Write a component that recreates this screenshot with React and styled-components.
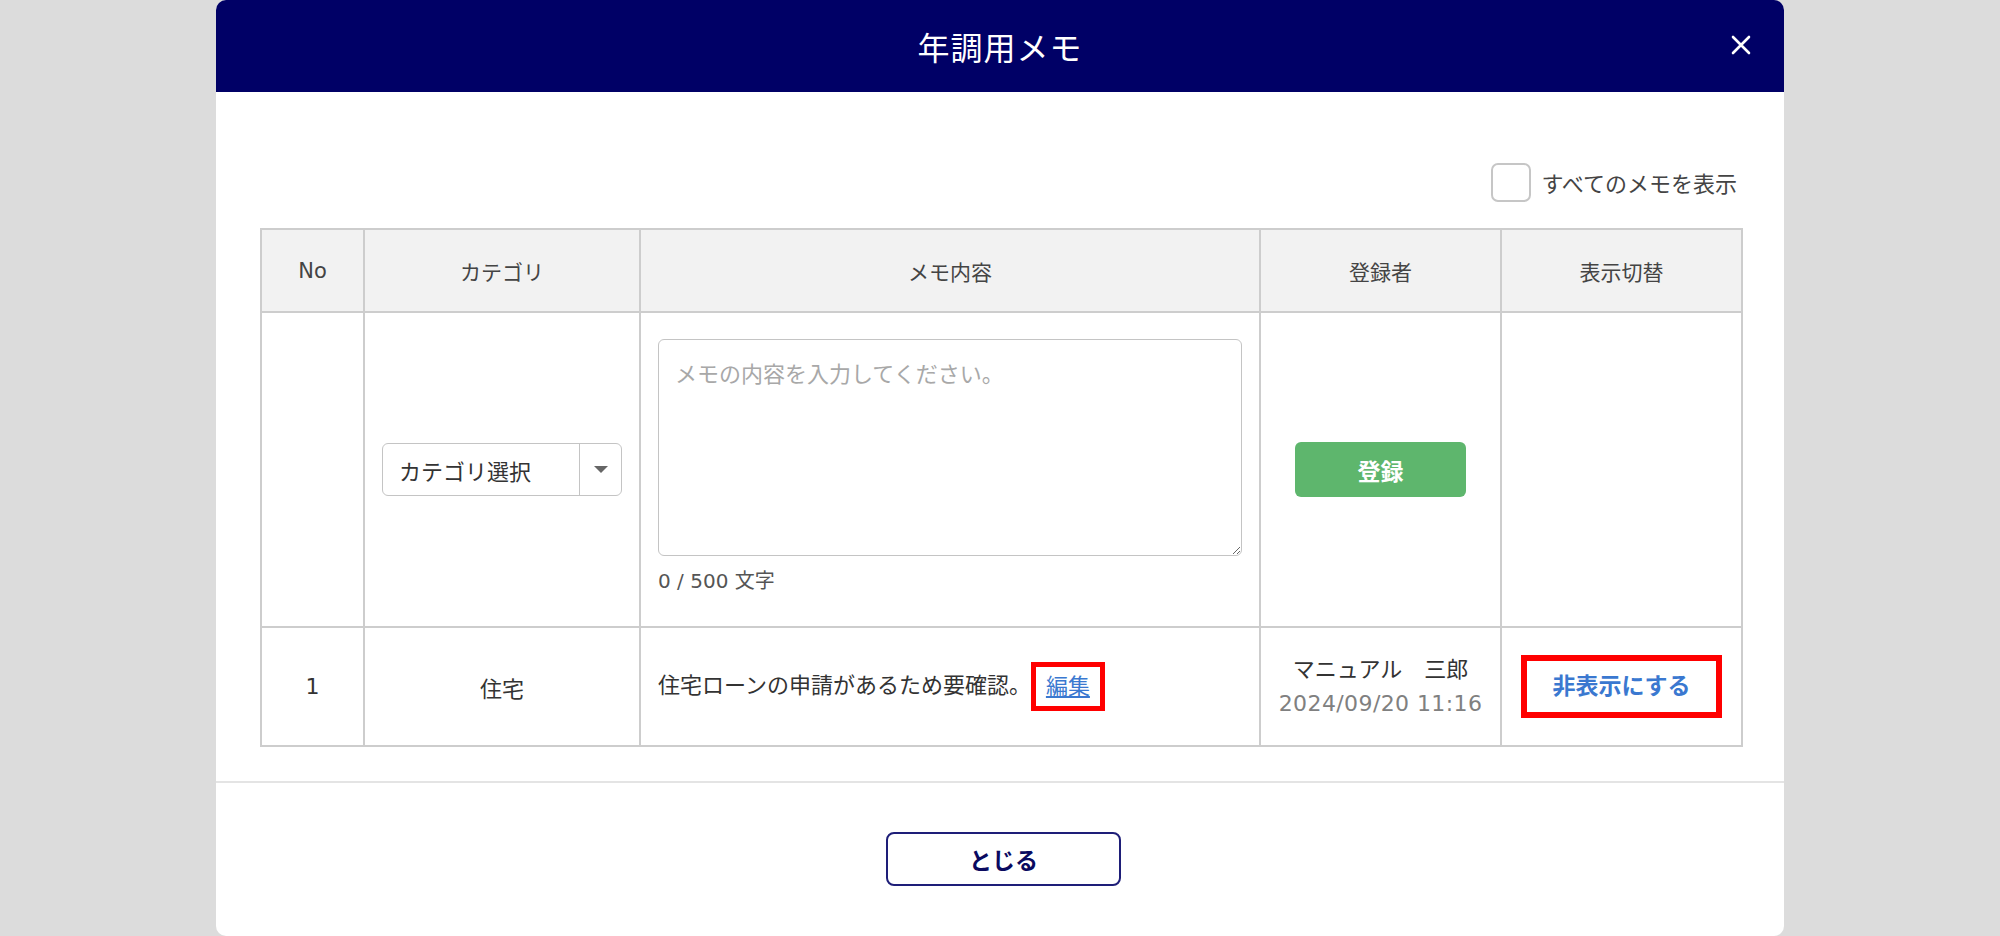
import React from "react";
import styled, { createGlobalStyle } from "styled-components";

// Style is under the component

const memo = {
  no: 1,
  category: "住宅",
  text: "住宅ローンの申請があるため要確認。",
  author: "マニュアル　三郎",
  date: "2024/09/20 11:16",
};

export default function App() {
  return (
    <>
      <GlobalStyle />
      <Modal>
        <Header>
          <Title>年調用メモ</Title>
          <CloseButton aria-label="close">
            <svg width="20" height="20" viewBox="0 0 20 20">
              <path d="M2 2 L18 18 M18 2 L2 18" stroke="#fff" strokeWidth="2.6" strokeLinecap="round" />
            </svg>
          </CloseButton>
        </Header>

        <Body>
          <Toolbar>
            <CheckBox />
            <CheckLabel>すべてのメモを表示</CheckLabel>
          </Toolbar>

          <Table>
            <colgroup>
              <col style={{ width: 103 }} />
              <col style={{ width: 276 }} />
              <col style={{ width: 620 }} />
              <col style={{ width: 241 }} />
              <col style={{ width: 241 }} />
            </colgroup>
            <thead>
              <tr>
                <Th>No</Th>
                <Th>カテゴリ</Th>
                <Th>メモ内容</Th>
                <Th>登録者</Th>
                <Th>表示切替</Th>
              </tr>
            </thead>
            <tbody>
              <tr>
                <Td $h={315} />
                <Td $h={315}>
                  <Select>
                    <SelectLabel>カテゴリ選択</SelectLabel>
                    <SelectArrow>
                      <Caret />
                    </SelectArrow>
                  </Select>
                </Td>
                <Td $h={315} $align="left" $top>
                  <MemoInput placeholder="メモの内容を入力してください。" />
                  <Counter>0 / 500 文字</Counter>
                </Td>
                <Td $h={315}>
                  <SubmitButton>登録</SubmitButton>
                </Td>
                <Td $h={315} />
              </tr>
              <tr>
                <Td $h={119}>{memo.no}</Td>
                <Td $h={119}>{memo.category}</Td>
                <Td $h={119} $align="left">
                  <MemoText>
                    {memo.text}
                    <Mark $pad="0 10px" $line={39} $bw={5}>
                      <EditLink href="#">編集</EditLink>
                    </Mark>
                  </MemoText>
                </Td>
                <Td $h={119}>
                  <Author>{memo.author}</Author>
                  <DateText>{memo.date}</DateText>
                </Td>
                <Td $h={119}>
                  <Mark $pad="0 25px" $line={51} $bw={6}>
                    <HideLink>非表示にする</HideLink>
                  </Mark>
                </Td>
              </tr>
            </tbody>
          </Table>
        </Body>

        <Footer>
          <CloseFooterButton>とじる</CloseFooterButton>
        </Footer>
      </Modal>
    </>
  );
}

// Style

const GlobalStyle = createGlobalStyle`
  html, body {
    margin: 0;
    padding: 0;
    background: #dcdcdc;
  }
  body {
    font-family: "DejaVu Sans", "Noto Sans CJK JP", sans-serif;
    color: #333;
  }
  * { box-sizing: border-box; }
`;

const Modal = styled.div`
  width: 1568px;
  height: 936px;
  margin: 0 auto;
  background: #fff;
  border-radius: 10px;
  overflow: hidden;
  display: flex;
  flex-direction: column;
`;

const Header = styled.header`
  height: 92px;
  flex: none;
  background: #000066;
  display: grid;
  grid-template-columns: 1fr auto 1fr;
  align-items: center;
  padding: 0 33px;
`;

const Title = styled.h1`
  grid-column: 2;
  margin: 0;
  font-family: "Noto Sans CJK JP", sans-serif;
  font-size: 32px;
  font-weight: 400;
  color: #fff;
  letter-spacing: 1px;
`;

const CloseButton = styled.button`
  grid-column: 3;
  justify-self: end;
  width: 20px;
  height: 20px;
  padding: 0;
  border: none;
  background: none;
  display: flex;
  cursor: pointer;
  margin-top: -2px;
`;

const Body = styled.div`
  flex: 1;
  padding: 70px 43px 34px 44px;
`;

const Toolbar = styled.div`
  display: flex;
  justify-content: flex-end;
  align-items: center;
  gap: 10px;
  height: 40px;
  margin-bottom: 26px;
  padding-right: 4px;
`;

const CheckBox = styled.span`
  width: 40px;
  height: 39px;
  border: 2px solid #c6c6c6;
  border-radius: 7px;
  background: #fff;
`;

const CheckLabel = styled.span`
  font-size: 22px;
  color: #444;
`;

const Table = styled.table`
  width: 100%;
  border-collapse: collapse;
  table-layout: fixed;
`;

const Th = styled.th`
  height: 83px;
  background: #f2f2f2;
  border: 2px solid #cdcdcd;
  font-weight: normal;
  font-size: 21px;
  color: #444;
  text-align: center;
`;

const Td = styled.td`
  height: ${p => p.$h}px;
  border: 2px solid #cdcdcd;
  text-align: ${p => p.$align || "center"};
  vertical-align: ${p => (p.$top ? "top" : "middle")};
  padding: ${p => (p.$top ? "26px 17px 0" : p.$align === "left" ? "0 17px" : "0")};
  font-size: 22px;
  color: #333;
`;

const Select = styled.div`
  display: inline-flex;
  width: 240px;
  height: 53px;
  border: 1.5px solid #c4c4c4;
  border-radius: 6px;
  background: #fff;
  text-align: left;
`;

const SelectLabel = styled.span`
  flex: 1;
  display: flex;
  align-items: center;
  padding-left: 16px;
  font-size: 22px;
  color: #333;
  border-right: 1.5px solid #c4c4c4;
`;

const SelectArrow = styled.span`
  width: 41px;
  display: flex;
  align-items: center;
  justify-content: center;
`;

const Caret = styled.span`
  width: 0;
  height: 0;
  border-left: 7px solid transparent;
  border-right: 7px solid transparent;
  border-top: 7px solid #666;
`;

const MemoInput = styled.textarea`
  display: block;
  width: 100%;
  height: 217px;
  border: 1.5px solid #c4c4c4;
  border-radius: 6px;
  padding: 20px 16px;
  font-family: inherit;
  font-size: 22px;
  line-height: 30px;
  color: #333;
  resize: vertical;
  outline: none;

  &::placeholder {
    color: #a8a8a8;
  }
`;

const Counter = styled.div`
  margin-top: 12px;
  font-size: 20px;
  line-height: 26px;
  color: #555;
`;

const SubmitButton = styled.button`
  width: 171px;
  height: 55px;
  border: none;
  border-radius: 6px;
  background: #5eb66d;
  color: #fff;
  font-family: inherit;
  font-size: 23px;
  font-weight: bold;
  cursor: pointer;
`;

const MemoText = styled.span`
  font-size: 22px;
  color: #333;
`;

const Mark = styled.span`
  display: inline-block;
  vertical-align: middle;
  border: ${p => p.$bw}px solid #ff0000;
  padding: ${p => p.$pad};
  line-height: ${p => p.$line}px;
`;

const EditLink = styled.a`
  color: #3a78d0;
  text-decoration: underline;
  font-size: 22px;
`;

const HideLink = styled.span`
  color: #3a78d0;
  font-weight: bold;
  font-size: 23px;
  cursor: pointer;
`;

const Author = styled.div`
  font-size: 22px;
  line-height: 34px;
  color: #333;
`;

const DateText = styled.div`
  font-size: 22px;
  letter-spacing: 0.4px;
  line-height: 34px;
  color: #808080;
`;

const Footer = styled.footer`
  flex: none;
  height: 157px;
  border-top: 2px solid #e4e4e4;
  padding-top: 49px;
  display: flex;
  justify-content: center;
  align-items: flex-start;
`;

const CloseFooterButton = styled.button`
  width: 235px;
  height: 54px;
  margin-left: 7px;
  border: 2px solid #1e1e78;
  border-radius: 8px;
  background: #fff;
  color: #0a0a60;
  font-family: inherit;
  font-size: 23px;
  font-weight: bold;
  cursor: pointer;
`;
